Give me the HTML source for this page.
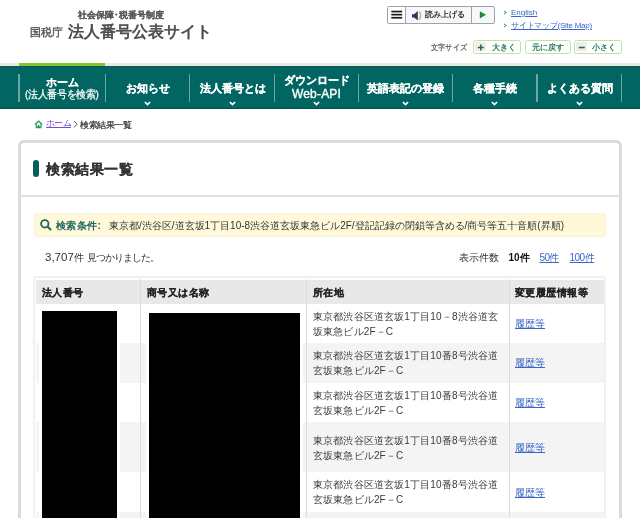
<!DOCTYPE html>
<html lang="ja">
<head>
<meta charset="utf-8">
<style>
*{margin:0;padding:0;box-sizing:border-box}
html,body{width:640px;height:518px;overflow:hidden;background:#fff}
body{will-change:transform;background:transparent}
body{font-family:"Liberation Sans",sans-serif;color:#333;position:relative}
.abs{position:absolute;white-space:nowrap}
/* header */
.sub{left:78px;top:9px;font-size:9px;color:#5a5a5a;font-weight:bold;-webkit-text-stroke:0.15px #5a5a5a}
.nta{left:30px;top:25px;font-size:11px;color:#555;-webkit-text-stroke:0.4px #555}
.site{left:68px;top:21px;font-size:16.3px;color:#484848;-webkit-text-stroke:0.65px #484848}
.tb{left:387px;top:6px;width:108px;height:18px;border:1px solid #9fa3a8;border-radius:2px;background:#f6f8fa}
.tb .c{position:absolute;top:0;height:16px;border-right:1px solid #9fa3a8}
.eng{left:511px;font-size:8px;color:#3a66c8;text-decoration:underline}
.bul{position:absolute;width:3px;height:3px;border-right:1.3px solid #25a070;border-top:1.3px solid #25a070;transform:rotate(45deg)}
.fs{left:431px;top:42px;font-size:8px;color:#555;transform:scaleX(0.9);transform-origin:0 0;-webkit-text-stroke:0.2px #555}
.btn{top:40px;height:14px;border:1.5px solid #c3e2a6;border-radius:2.5px;background:#fff;font-size:8px;font-weight:bold;color:#2a7a5a;line-height:11px}
.btn .ic{position:absolute;left:1px;top:1px;width:10.5px;height:9px;background:#efefe7}
/* nav */
.topbar{left:0;top:63px;width:640px;height:3px;background:#ecebe3}
.greenbar{left:19px;top:63px;width:86px;height:3px;background:#86c530}
.nav{left:0;top:66px;width:640px;height:43px;background:#016661;border-bottom:1.5px solid #03504c;box-shadow:inset 0 1px 0 #0b5753}
.sep{position:absolute;top:8px;width:1.5px;height:28px;background:#6fa6a2}
.ni{position:absolute;color:#fff;font-size:11px;font-weight:bold;text-align:center;line-height:12px;-webkit-text-stroke:0.2px #fff}
.chev{position:absolute;width:4px;height:4px;border-right:1.5px solid #fff;border-bottom:1.5px solid #fff;transform:rotate(45deg)}
/* breadcrumb */
.bc{left:46px;top:119px;font-size:9px;color:#333}
.bc a{color:#7a50c8;text-decoration:underline}
/* panel */
.panel{left:18px;top:140px;width:604px;height:400px;border:3px solid #dbdbdb;border-radius:6px}
.bar{left:33px;top:160px;width:5.5px;height:17px;background:#03605c;border-radius:3px}
.ttl{left:46px;top:161px;font-size:14px;font-weight:bold;color:#333;letter-spacing:0.5px;-webkit-text-stroke:0.1px #333}
.div{left:21px;top:195px;width:598px;height:2px;background:#e0e0e0}
.cond{left:34px;top:213px;width:572px;height:23.5px;background:#fff9da;border:1px solid #f6f1da;border-radius:3px}
.ct{left:55.5px;top:219px;font-size:10px;font-weight:bold;color:#1f6662;letter-spacing:0.5px}
.cv{left:109px;top:219px;font-size:10px;color:#333}
.cnt{left:45px;top:251px;font-size:11.5px;color:#333}
.cnt span{font-size:10px}
.disp{left:459px;top:251px;font-size:10px;color:#333}
.disp b{color:#111}
.disp a{color:#3a66c8;text-decoration:underline}
/* table */
.tframe{left:33px;top:276px;width:573px;height:300px;border:2px solid #f0f0f0;border-radius:3px}
.thead{left:36px;top:280px;width:568px;height:24px;background:#e8e8e8}
.th{top:286px;font-size:10px;font-weight:bold;color:#222;letter-spacing:0.45px;-webkit-text-stroke:0.15px #222}
.vl{top:279px;width:1px;height:260px;background:#dcdcdc}
.stripe{left:36px;width:568px;background:#f4f4f4}
.addr{left:313px;font-size:10px;color:#3a3a3a;line-height:15px;letter-spacing:0.15px}
.lnk{left:515px;font-size:10px;color:#3a66c8;text-decoration:underline}
.blk{background:#000}
.wh{background:#fff}
</style>
</head>
<body>
<!-- header -->
<div class="abs sub">社会保障･税番号制度</div>
<div class="abs nta">国税庁</div>
<div class="abs site">法人番号公表サイト</div>

<div class="abs tb">
  <div class="c" style="left:0;width:18px;background:#fff"></div>
  <div class="c" style="left:18px;width:66px"></div>
</div>
<svg class="abs" style="left:387px;top:6px" width="108" height="18" viewBox="0 0 108 18">
  <rect x="4.3" y="4.7" width="10.9" height="1.7" fill="#1a1a1a"/>
  <rect x="4.3" y="7.8" width="10.9" height="1.7" fill="#1a1a1a"/>
  <rect x="4.3" y="10.9" width="10.9" height="1.7" fill="#1a1a1a"/>
  <path d="M25 8.2h2.2l3.6-3.2v9.6l-3.6-3.2H25z" fill="#2b3560"/>
  <path d="M32.3 5.6q2.4 4.2 0 8.4" fill="none" stroke="#f0a080" stroke-width="1.6"/>
  <path d="M92.8 5.3v7.1l6.2-3.55z" fill="#22883a"/>
</svg>
<div class="abs" style="left:425px;top:9px;font-size:8px;font-weight:bold;color:#333">読み上げる</div>
<div class="abs eng" style="top:8px">English</div>
<div class="abs eng" style="top:20px;letter-spacing:-0.25px">サイトマップ(Site Map)</div>
<div class="abs bul" style="left:503px;top:11px"></div>
<div class="abs bul" style="left:503px;top:24px"></div>

<div class="abs fs">文字サイズ</div>
<div class="abs btn" style="left:473px;width:48px"><div class="ic"></div><svg class="abs" style="left:3px;top:3px" width="8" height="8"><path d="M0.8 3.5h6M3.8 0.5v6" stroke="#1f6f4f" stroke-width="1.6"/></svg><span class="abs" style="left:18px;top:1px">大きく</span></div>
<div class="abs btn" style="left:525px;width:46px"><span class="abs" style="left:6px;top:1px">元に戻す</span></div>
<div class="abs btn" style="left:574px;width:48px"><div class="ic"></div><svg class="abs" style="left:3px;top:3px" width="8" height="8"><path d="M0.8 3.5h6" stroke="#1f6f4f" stroke-width="1.6"/></svg><span class="abs" style="left:16.5px;top:1px">小さく</span></div>

<!-- nav -->
<div class="abs topbar"></div>
<div class="abs greenbar"></div>
<div class="abs nav">
  <div class="sep" style="left:18.15px"></div>
  <div class="sep" style="left:104.75px"></div>
  <div class="sep" style="left:188.85px"></div>
  <div class="sep" style="left:273.65px"></div>
  <div class="sep" style="left:357.65px"></div>
  <div class="sep" style="left:451.75px"></div>
  <div class="sep" style="left:536.25px"></div>
  <div class="sep" style="left:620.65px"></div>
  <div class="ni" style="left:19px;width:86px;top:10px;line-height:12px;-webkit-text-stroke:0.2px #fff">ホーム</div>
  <div class="ni" style="left:19px;width:86px;top:22px;line-height:12px;font-weight:normal;-webkit-text-stroke:0.25px #fff;letter-spacing:-0.3px"><span style="display:inline-block;transform:scaleX(0.9)">(法人番号を検索)</span></div>
  <div class="ni" style="left:106px;width:84px;top:16px">お知らせ</div>
  <div class="ni" style="left:191px;width:83px;top:16px">法人番号とは</div>
  <div class="ni" style="left:275px;width:83px;top:8px;line-height:12px">ダウンロード</div>
  <div class="ni" style="left:275px;width:83px;top:22px;line-height:12px;font-size:12px;font-weight:normal;-webkit-text-stroke:0.35px #fff;letter-spacing:0.2px">Web-API</div>
  <div class="ni" style="left:359px;width:93px;top:16px">英語表記の登録</div>
  <div class="ni" style="left:453px;width:84px;top:16px">各種手続</div>
  <div class="ni" style="left:538px;width:83px;top:16px">よくある質問</div>
  <svg class="abs" style="left:144.1px;top:35px" width="7" height="5" viewBox="0 0 7 5"><path d="M0.9 1L3.5 3.6L6.1 1" fill="none" stroke="#fff" stroke-width="1.7"/></svg>
  <svg class="abs" style="left:228.7px;top:35px" width="7" height="5" viewBox="0 0 7 5"><path d="M0.9 1L3.5 3.6L6.1 1" fill="none" stroke="#fff" stroke-width="1.7"/></svg>
  <svg class="abs" style="left:313.0px;top:35px" width="7" height="5" viewBox="0 0 7 5"><path d="M0.9 1L3.5 3.6L6.1 1" fill="none" stroke="#fff" stroke-width="1.7"/></svg>
  <svg class="abs" style="left:402.1px;top:35px" width="7" height="5" viewBox="0 0 7 5"><path d="M0.9 1L3.5 3.6L6.1 1" fill="none" stroke="#fff" stroke-width="1.7"/></svg>
  <svg class="abs" style="left:491.3px;top:35px" width="7" height="5" viewBox="0 0 7 5"><path d="M0.9 1L3.5 3.6L6.1 1" fill="none" stroke="#fff" stroke-width="1.7"/></svg>
  <svg class="abs" style="left:575.7px;top:35px" width="7" height="5" viewBox="0 0 7 5"><path d="M0.9 1L3.5 3.6L6.1 1" fill="none" stroke="#fff" stroke-width="1.7"/></svg>
</div>

<!-- breadcrumb -->
<svg class="abs" style="left:33.5px;top:119.5px" width="10" height="9" viewBox="0 0 10 9"><path d="M0.9 4.6L4.6 1.1L8.3 4.6" fill="none" stroke="#1f9e5e" stroke-width="1.4" stroke-linejoin="miter"/><path d="M2.3 4.2V7.6H6.9V4.2" fill="none" stroke="#1f9e5e" stroke-width="1.2"/><rect x="3.7" y="5.2" width="1.8" height="2.6" fill="#137a48"/></svg>
<div class="abs bc" style="left:46px;top:117px"><a style="letter-spacing:-0.7px">ホーム</a></div>
<svg class="abs" style="left:72.5px;top:119.5px" width="6" height="8" viewBox="0 0 6 8"><path d="M1 1L4.2 4.2L1 7.4" fill="none" stroke="#555" stroke-width="1"/></svg>
<div class="abs bc" style="left:80px;letter-spacing:-0.4px;-webkit-text-stroke:0.2px #333">検索結果一覧</div>

<!-- panel -->
<div class="abs panel"></div>
<div class="abs bar"></div>
<div class="abs ttl">検索結果一覧</div>
<div class="abs div"></div>

<div class="abs cond"></div>
<svg class="abs" style="left:40px;top:219px" width="12" height="12" viewBox="0 0 12 12"><circle cx="4.8" cy="4.8" r="3.7" fill="none" stroke="#1f6662" stroke-width="1.8"/><path d="M7.5 7.5L11 11" stroke="#1f6662" stroke-width="2"/></svg>
<div class="abs ct">検索条件:</div>
<div class="abs cv">東京都/渋谷区/道玄坂1丁目10-8渋谷道玄坂東急ビル2F/登記記録の閉鎖等含める/商号等五十音順(昇順)</div>

<div class="abs cnt">3,707<span>件 </span><span style="letter-spacing:-0.9px">見つかりました。</span></div>
<div class="abs disp" style="left:459px">表示件数</div>
<div class="abs disp" style="left:508.5px"><b>10件</b></div>
<div class="abs disp" style="left:539.5px"><a style="letter-spacing:-0.6px">50件</a></div>
<div class="abs disp" style="left:569.5px"><a style="letter-spacing:-0.5px">100件</a></div>

<!-- table -->
<div class="abs tframe"></div>
<div class="abs thead"></div>
<div class="abs stripe" style="top:343px;height:40px"></div>
<div class="abs stripe" style="top:422px;height:50px"></div>
<div class="abs stripe" style="top:512px;height:10px"></div>
<div class="abs vl" style="left:140px"></div>
<div class="abs vl" style="left:306px"></div>
<div class="abs vl" style="left:509px"></div>
<div class="abs th" style="left:42px">法人番号</div>
<div class="abs th" style="left:147px">商号又は名称</div>
<div class="abs th" style="left:313px">所在地</div>
<div class="abs th" style="left:515px">変更履歴情報等</div>

<div class="abs wh" style="left:39px;top:308px;width:81px;height:220px"></div>
<div class="abs blk" style="left:42px;top:311px;width:75px;height:220px"></div>
<div class="abs wh" style="left:146px;top:310px;width:157px;height:220px"></div>
<div class="abs blk" style="left:149px;top:313px;width:151px;height:220px"></div>

<div class="abs addr" style="top:309px">東京都渋谷区道玄坂1丁目10－8渋谷道玄<br>坂東急ビル2F－C</div>
<div class="abs addr" style="top:348px">東京都渋谷区道玄坂1丁目10番8号渋谷道<br>玄坂東急ビル2F－C</div>
<div class="abs addr" style="top:388px">東京都渋谷区道玄坂1丁目10番8号渋谷道<br>玄坂東急ビル2F－C</div>
<div class="abs addr" style="top:433px">東京都渋谷区道玄坂1丁目10番8号渋谷道<br>玄坂東急ビル2F－C</div>
<div class="abs addr" style="top:477px">東京都渋谷区道玄坂1丁目10番8号渋谷道<br>玄坂東急ビル2F－C</div>
<div class="abs lnk" style="top:317px">履歴等</div>
<div class="abs lnk" style="top:356px">履歴等</div>
<div class="abs lnk" style="top:396px">履歴等</div>
<div class="abs lnk" style="top:441px">履歴等</div>
<div class="abs lnk" style="top:486px">履歴等</div>
</body>
</html>
